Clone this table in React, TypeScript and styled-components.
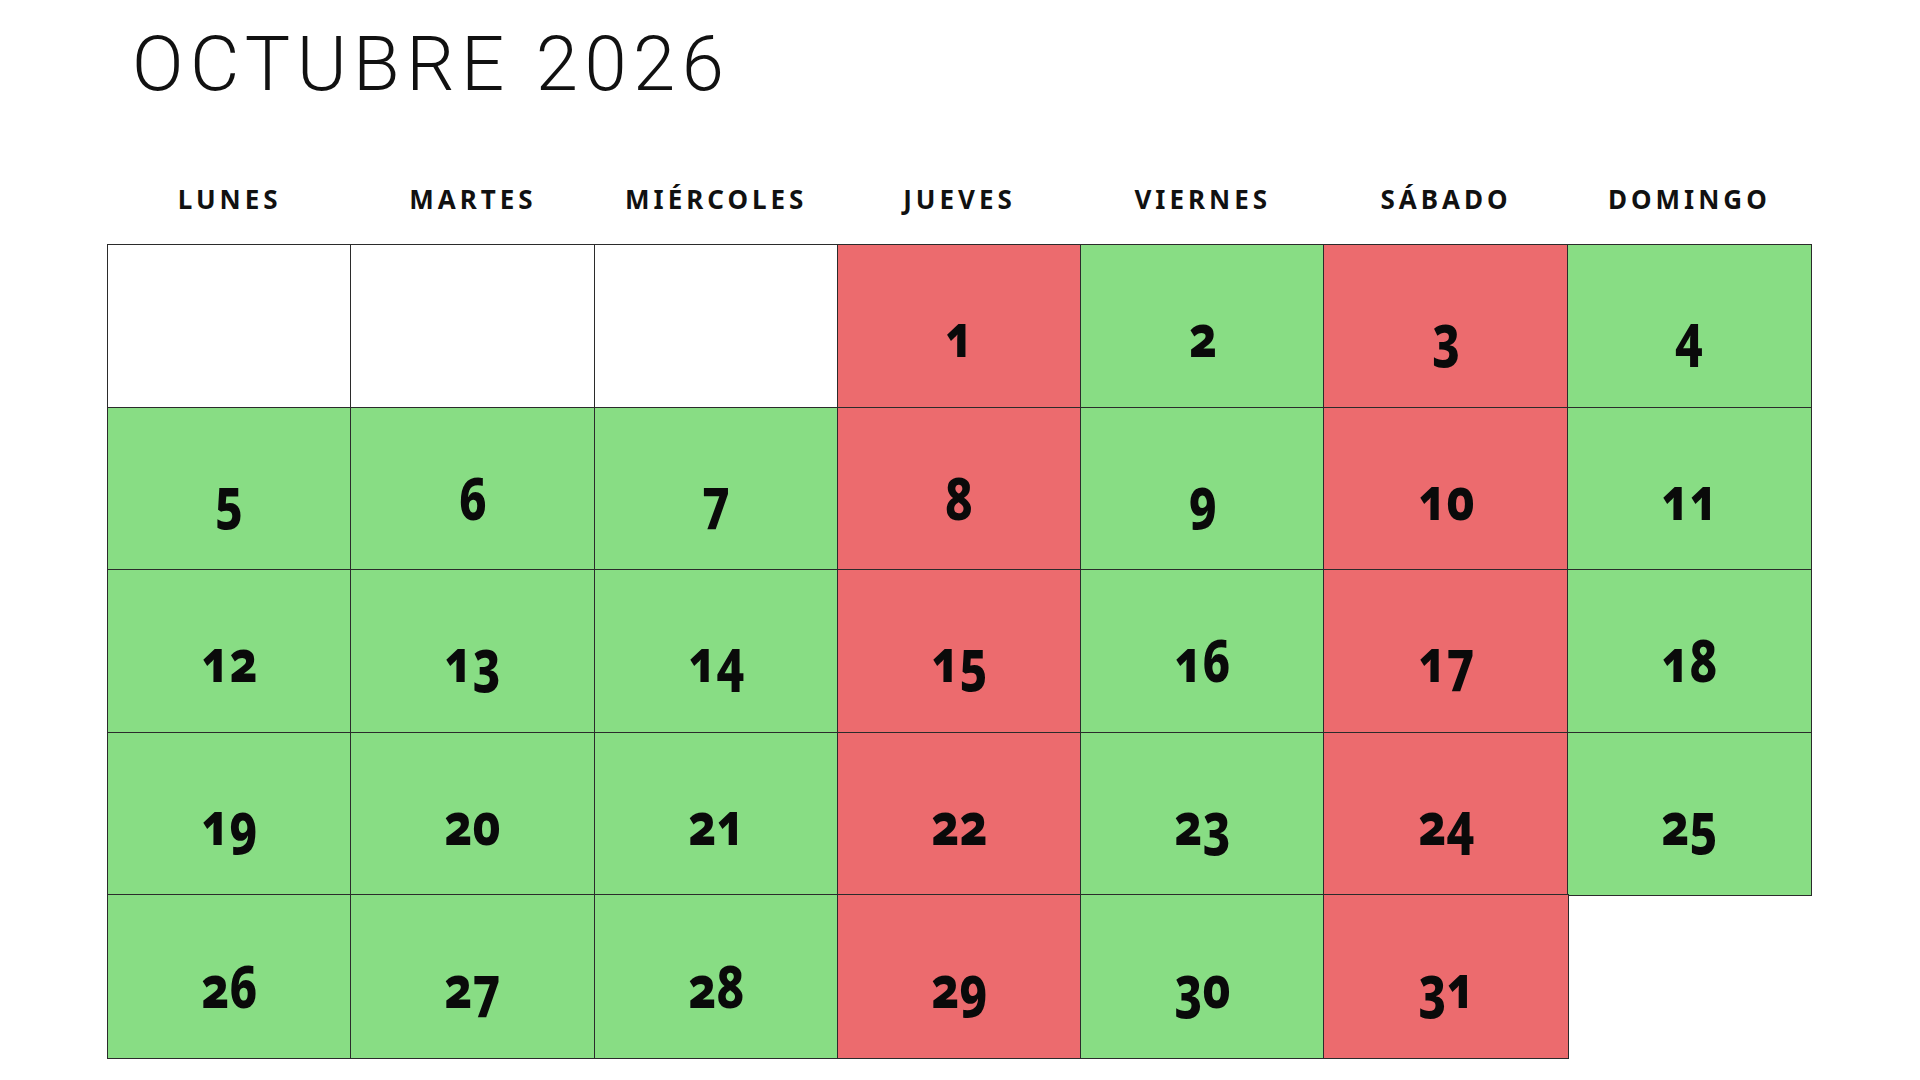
import styled, { createGlobalStyle } from "styled-components";

const GlobalStyle = createGlobalStyle`
    html, body {
        margin: 0;
        padding: 0;
        background: #ffffff;
    }
`;

const Page = styled.div`
    width: 1920px;
    height: 1080px;
    display: flex;
    flex-direction: column;
    padding: 0 109px 0 108px;
    box-sizing: border-box;
    overflow: hidden;
`;

const Title = styled.h1`
    margin: 26px 0 0 24px;
    font-family: Roboto, "Liberation Sans", sans-serif;
    font-weight: 300;
    font-size: 76px;
    line-height: 76px;
    letter-spacing: 6.5px;
    color: #111;
`;

const WeekRow = styled.div`
    display: grid;
    grid-template-columns: repeat(7, 1fr);
    align-items: start;
    margin-top: 84px;
    height: 59px;
`;

const WeekDay = styled.div`
    text-align: center;
    font-family: "Noto Sans", "Open Sans", sans-serif;
    font-weight: 700;
    font-size: 26px;
    line-height: 26px;
    letter-spacing: 4px;
    color: #111;
`;

const Grid = styled.div`
    display: grid;
    grid-template-columns: repeat(7, 1fr);
    grid-auto-rows: 162.6px;
`;

type Tone = "red" | "green" | "blank";

const tones: Record<Tone, string> = {
    red: "#ec6b6e",
    green: "#88dd84",
    blank: "#ffffff",
};

const Cell = styled.div<{ $tone: Tone }>`
    display: flex;
    justify-content: center;
    align-items: center;
    background-color: ${props => tones[props.$tone]};
    outline: 1px solid #2b2b2b;
    outline-offset: -0.5px;
`;

const DayNumber = styled.span`
    display: inline-block;
    font-family: "Noto Sans", "Open Sans", sans-serif;
    font-weight: 800;
    font-size: 58px;
    line-height: 1;
    font-variant-numeric: oldstyle-nums;
    color: #0a0a0a;
    padding-top: 18px;
    transform: scaleX(0.82);
`;

const weekDays = ["LUNES", "MARTES", "MIÉRCOLES", "JUEVES", "VIERNES", "SÁBADO", "DOMINGO"];

// octubre 2026 empieza en jueves
const leading = 3;
const daysInMonth = 31;

function toneFor(index: number): Tone {
    const col = index % 7;
    if (col === 3 || col === 5) return "red";
    return "green";
}

function App() {
    const cells: { day?: number; tone: Tone }[] = [];
    for (let i = 0; i < leading; i++) cells.push({ tone: "blank" });
    for (let d = 1; d <= daysInMonth; d++) {
        cells.push({ day: d, tone: toneFor(cells.length) });
    }

    return (
        <>
            <GlobalStyle />
            <Page>
                <Title>OCTUBRE 2026</Title>
                <WeekRow>
                    {weekDays.map(w => (
                        <WeekDay key={w}>{w}</WeekDay>
                    ))}
                </WeekRow>
                <Grid>
                    {cells.map((c, i) => (
                        <Cell key={i} $tone={c.tone}>
                            {c.day && <DayNumber>{c.day}</DayNumber>}
                        </Cell>
                    ))}
                </Grid>
            </Page>
        </>
    );
}

export default App;
